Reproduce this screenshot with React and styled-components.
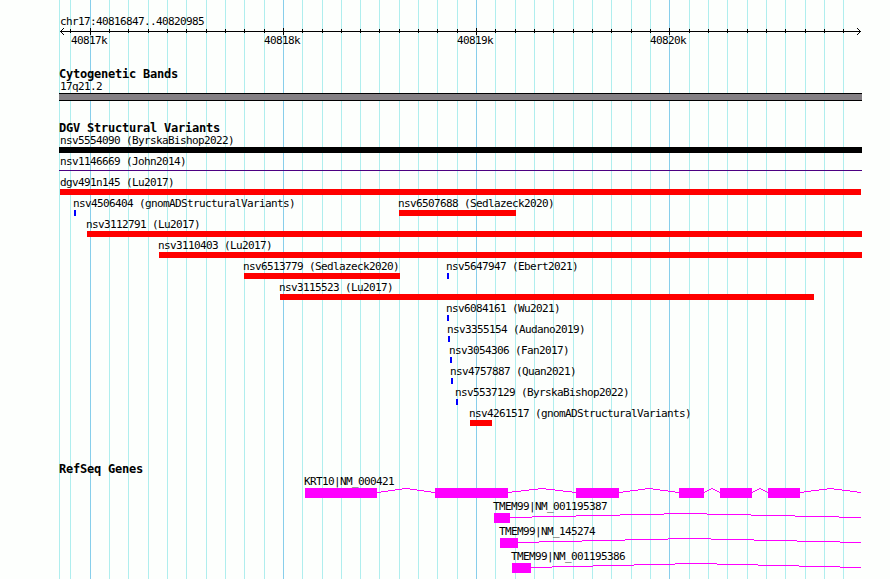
import React from "react";
import styled, { createGlobalStyle } from "styled-components";

const LEFT = 59;
const HEIGHT = 579;

const minorLines = [
  59, 70, 109, 128, 148, 167, 186, 206, 225, 244, 264, 302, 322, 341, 360, 379,
  399, 418, 437, 457, 495, 515, 534, 553, 573, 592, 611, 631, 650, 689, 708,
  727, 747, 766, 785, 805, 824, 843,
];

const majorLines = [
  { x: 90, label: "40817k", labelX: 71 },
  { x: 283, label: "40818k", labelX: 264 },
  { x: 476, label: "40819k", labelX: 457 },
  { x: 669, label: "40820k", labelX: 650 },
];

const variants = [
  [{ name: "nsv5554090 (ByrskaBishop2022)", start: 59, end: 862, color: "#000000", labelX: 60 }],
  [{ name: "nsv1146669 (John2014)", start: 59, end: 862, color: "#4b0082", thin: true, labelX: 60 }],
  [{ name: "dgv491n145 (Lu2017)", start: 60, end: 861 }],
  [
    { name: "nsv4506404 (gnomADStructuralVariants)", start: 74, end: 76, color: "#0000ff", labelX: 73 },
    { name: "nsv6507688 (Sedlazeck2020)", start: 399, end: 516, labelX: 398 },
  ],
  [{ name: "nsv3112791 (Lu2017)", start: 87, end: 862, labelX: 86 }],
  [{ name: "nsv3110403 (Lu2017)", start: 159, end: 862, labelX: 158 }],
  [
    { name: "nsv6513779 (Sedlazeck2020)", start: 244, end: 400, labelX: 243 },
    { name: "nsv5647947 (Ebert2021)", start: 447, end: 449, color: "#0000ff", labelX: 446 },
  ],
  [{ name: "nsv3115523 (Lu2017)", start: 280, end: 814, labelX: 279 }],
  [{ name: "nsv6084161 (Wu2021)", start: 447, end: 449, color: "#0000ff", labelX: 446 }],
  [{ name: "nsv3355154 (Audano2019)", start: 448, end: 450, color: "#0000ff", labelX: 447 }],
  [{ name: "nsv3054306 (Fan2017)", start: 450, end: 452, color: "#0000ff", labelX: 449 }],
  [{ name: "nsv4757887 (Quan2021)", start: 451, end: 453, color: "#0000ff", labelX: 450 }],
  [{ name: "nsv5537129 (ByrskaBishop2022)", start: 456, end: 458, color: "#0000ff", labelX: 455 }],
  [{ name: "nsv4261517 (gnomADStructuralVariants)", start: 470, end: 492, labelX: 469 }],
];

const genes = [
  {
    name: "KRT10|NM_000421",
    labelX: 304,
    exons: [[305, 377], [435, 508], [576, 619], [679, 704], [720, 752], [768, 800]],
  },
  { name: "TMEM99|NM_001195387", labelX: 493, exons: [[494, 510]] },
  { name: "TMEM99|NM_145274", labelX: 499, exons: [[500, 518]] },
  { name: "TMEM99|NM_001195386", labelX: 511, exons: [[512, 531]] },
];

// stepped hat, rises 4px to the middle of the intron and falls back
const hatPath = (from, to) => {
  const step = (to - from) / 8;
  const levels = [4, 3, 2, 1, 0, 1, 2, 3, 4];
  return levels
    .map((y, i) => {
      const x1 = i === 0 ? from : Math.round(from + (i - 0.5) * step);
      const x2 = i === 8 ? to : Math.round(from + (i + 0.5) * step);
      return `M${x1} ${y}H${x2}v1H${x1}z`;
    })
    .join("");
};

const Axis = () => (
  <AxisDrawing viewBox="59 28 803 7" width="803" height="7">
    <path d="M60 31.5H861" />
    <path d="M63.5 28v1M62.5 29v1M61.5 30v1M60.5 31v1M61.5 32v1M62.5 33v1M63.5 34v1" />
    <path d="M857.5 28v1M858.5 29v1M859.5 30v1M860.5 31v1M859.5 32v1M858.5 33v1M857.5 34v1" />
    {minorLines.slice(1).map((x) => (
      <path key={x} d={`M${x + 0.5} 29v4`} />
    ))}
    {majorLines.map(({ x }) => (
      <path key={x} d={`M${x + 0.5} 28v7`} />
    ))}
  </AxisDrawing>
);

const GeneModel = ({ exons }) => {
  const gaps = exons.map(([, end], i) => [end, exons[i + 1] ? exons[i + 1][0] : 861]);
  return (
    <GeneDrawing viewBox="59 0 803 10" width="803" height="10">
      {gaps.map(([from, to]) => (
        <path key={from} d={hatPath(from, to)} />
      ))}
      {exons.map(([start, end]) => (
        <rect key={start} x={start} y="0" width={end - start} height="10" />
      ))}
    </GeneDrawing>
  );
};

const App = () => {
  return (
    <>
      <GlobalStyle />
      <Browser>
        <GridLines viewBox={`0 0 890 ${HEIGHT}`} width="890" height={HEIGHT}>
          {minorLines.map((x) => (
            <rect key={x} x={x} y="0" width="1" height={HEIGHT} fill="#afeeee" />
          ))}
          {majorLines.map(({ x }) => (
            <rect key={x} x={x} y="0" width="1" height={HEIGHT} fill="#87ceeb" />
          ))}
        </GridLines>

        <Tracks>
          <Ruler>
            <Label $x={60}>chr17:40816847..40820985</Label>
            <Axis />
            <Overlap>
              {majorLines.map(({ label, labelX }) => (
                <Label key={label} $x={labelX}>
                  {label}
                </Label>
              ))}
            </Overlap>
          </Ruler>

          <Track $gap={20}>
            <Title>Cytogenetic Bands</Title>
            <Label $x={60}>17q21.2</Label>
            <Band />
          </Track>

          <Track $gap={21}>
            <Title>DGV Structural Variants</Title>
            {variants.map((row) => (
              <VariantRow key={row[0].name}>
                {row.map((v) => (
                  <Feature key={v.name}>
                    <Label $x={v.labelX || v.start}>{v.name}</Label>
                    <Bar $start={v.start} $end={v.end} $color={v.color} $thin={v.thin} />
                  </Feature>
                ))}
              </VariantRow>
            ))}
          </Track>

          <Track $gap={35}>
            <Title>RefSeq Genes</Title>
            {genes.map((gene) => (
              <GeneRow key={gene.name}>
                <Label $x={gene.labelX}>{gene.name}</Label>
                <GeneModel exons={gene.exons} />
              </GeneRow>
            ))}
          </Track>
        </Tracks>
      </Browser>
    </>
  );
};

const GlobalStyle = createGlobalStyle`
  body {
    margin: 0;
    background: #fdfffd;
    overflow: hidden;
  }
`;

const Browser = styled.div`
  display: grid;
  width: 890px;
  height: ${HEIGHT}px;
  overflow: hidden;
  color: #000;
  font-family: "DejaVu Sans Mono", "Liberation Mono", monospace;
  & > * {
    grid-area: 1 / 1;
  }
`;

const GridLines = styled.svg`
  display: block;
  shape-rendering: crispEdges;
`;

const Tracks = styled.div`
  display: flex;
  flex-direction: column;
  box-sizing: border-box;
  width: 862px;
  padding: 15px 0 0 ${LEFT}px;
`;

const Ruler = styled.div`
  display: flex;
  flex-direction: column;
  height: 33px;
`;

const AxisDrawing = styled.svg`
  display: block;
  flex: none;
  stroke: #000;
  stroke-width: 1;
  shape-rendering: crispEdges;
  & + * {
    margin-top: -1px;
  }
`;

const Overlap = styled.div`
  display: grid;
  & > * {
    grid-area: 1 / 1;
  }
`;

const Label = styled.div`
  height: 13px;
  margin-left: ${(props) => props.$x - LEFT}px;
  font-size: 11px;
  line-height: 13px;
  letter-spacing: -0.622px;
  white-space: pre;
`;

const Title = styled.div`
  height: 12px;
  font-size: 12px;
  font-weight: bold;
  line-height: 13px;
  letter-spacing: -0.224px;
  white-space: pre;
`;

const Track = styled.section`
  display: flex;
  flex-direction: column;
  margin-top: ${(props) => props.$gap}px;
`;

const Band = styled.div`
  box-sizing: border-box;
  height: 8px;
  border: solid #000;
  border-width: 1px 0;
  background: #848084;
`;

const VariantRow = styled(Overlap)`
  height: 21px;
`;

const Feature = styled.div`
  display: flex;
  flex-direction: column;
`;

const Bar = styled.div`
  width: ${(props) => props.$end - props.$start}px;
  height: ${(props) => (props.$thin ? 1 : 6)}px;
  margin-top: ${(props) => (props.$thin ? 2 : 0)}px;
  margin-left: ${(props) => props.$start - LEFT}px;
  background: ${(props) => props.$color || "#ff0000"};
`;

const GeneRow = styled.div`
  height: 25px;
`;

const GeneDrawing = styled.svg`
  display: block;
  shape-rendering: crispEdges;
  fill: #ff00ff;
`;

export default App;
